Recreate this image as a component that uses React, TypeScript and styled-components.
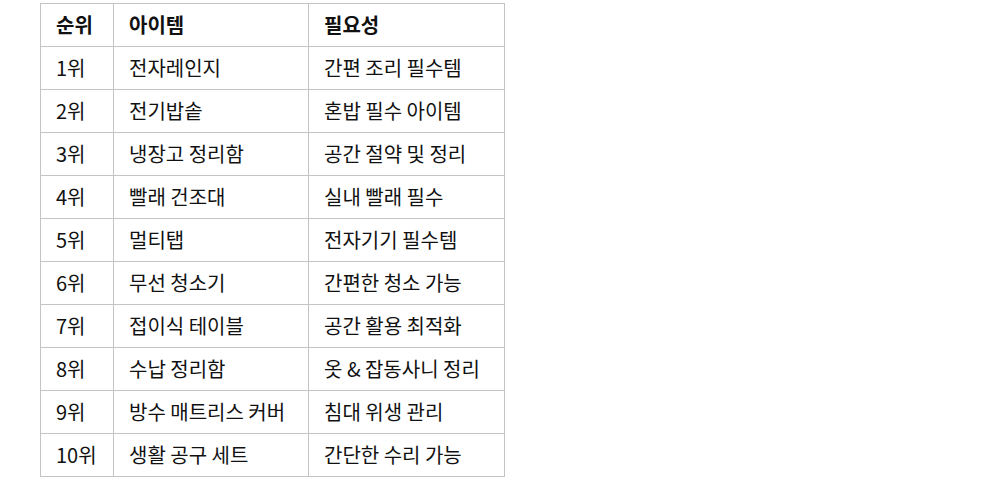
import React from "react";
import styled, { createGlobalStyle } from "styled-components";

const Global = createGlobalStyle`
  html, body { margin: 0; padding: 0; background: #ffffff; }
  body { font-family: "Noto Sans CJK KR", "Noto Sans", sans-serif; color: #111111; }
`;

const Page = styled.div`
  padding: 3px 0 0 40px;
`;

const Table = styled.table`
  border-collapse: collapse;
  font-size: 20px;
  line-height: 1;
`;

const Cell = styled.td<{ $w: number }>`
  width: ${(p) => p.$w}px;
  height: 43px;
  box-sizing: border-box;
  padding: 0 0 0 15px;
  border: 1px solid #c4c4c4;
  text-align: left;
  vertical-align: middle;
  font-weight: 400;
  white-space: nowrap;
`;

const HeadCell = styled(Cell).attrs({ as: "th" })`
  font-weight: 600;
`;

const widths = [73, 195, 196];

const rows: [string, string, string][] = [
  ["1위", "전자레인지", "간편 조리 필수템"],
  ["2위", "전기밥솥", "혼밥 필수 아이템"],
  ["3위", "냉장고 정리함", "공간 절약 및 정리"],
  ["4위", "빨래 건조대", "실내 빨래 필수"],
  ["5위", "멀티탭", "전자기기 필수템"],
  ["6위", "무선 청소기", "간편한 청소 가능"],
  ["7위", "접이식 테이블", "공간 활용 최적화"],
  ["8위", "수납 정리함", "옷 & 잡동사니 정리"],
  ["9위", "방수 매트리스 커버", "침대 위생 관리"],
  ["10위", "생활 공구 세트", "간단한 수리 가능"],
];

export default function App() {
  return (
    <>
      <Global />
      <Page>
        <Table>
          <thead>
            <tr>
              {["순위", "아이템", "필요성"].map((h, i) => (
                <HeadCell key={h} $w={widths[i]}>
                  {h}
                </HeadCell>
              ))}
            </tr>
          </thead>
          <tbody>
            {rows.map((r) => (
              <tr key={r[0]}>
                {r.map((c, i) => (
                  <Cell key={i} $w={widths[i]}>
                    {c}
                  </Cell>
                ))}
              </tr>
            ))}
          </tbody>
        </Table>
      </Page>
    </>
  );
}
